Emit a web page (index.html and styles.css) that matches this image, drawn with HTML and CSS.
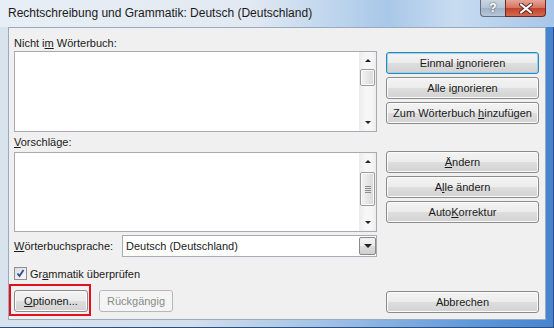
FILE: index.html
```html
<!DOCTYPE html>
<html lang="de">
<head>
    <meta charset="UTF-8">
    <title>Rechtschreibung und Grammatik</title>
    <link rel="stylesheet" href="styles.css">
</head>
<body>
    <div class="window">
        <div class="titlebar">
            <span class="title">Rechtschreibung und Grammatik: Deutsch (Deutschland)</span>
            <div class="caption">
                <span class="cap-help">?</span>
                <span class="cap-close">
                    <svg width="14" height="11" viewBox="0 0 14 11">
                        <path d="M2 1.5 L12 9.5 M12 1.5 L2 9.5" stroke="#5a2a22" stroke-width="4" stroke-linecap="round"/>
                        <path d="M2 1.5 L12 9.5 M12 1.5 L2 9.5" stroke="#fff" stroke-width="2.2" stroke-linecap="round"/>
                    </svg>
                </span>
            </div>
        </div>
        <div class="client">
            <div class="left">
                <div class="label first">Nicht i<u>m</u> Wörterbuch:</div>
                <div class="listbox top-box">
                    <div class="list-text"></div>
                    <div class="vscroll">
                        <div class="arrow"><span class="tri-up"></span></div>
                        <div class="thumb small"></div>
                        <div class="track"></div>
                        <div class="arrow"><span class="tri-down"></span></div>
                    </div>
                </div>
                <div class="label second"><u>V</u>orschläge:</div>
                <div class="listbox bottom-box">
                    <div class="list-text"></div>
                    <div class="vscroll">
                        <div class="arrow"><span class="tri-up"></span></div>
                        <div class="thumb big"><span class="grip"></span></div>
                        <div class="track"></div>
                        <div class="arrow"><span class="tri-down"></span></div>
                    </div>
                </div>
                <div class="langrow">
                    <span class="lang-label"><u>W</u>örterbuchsprache:</span>
                    <div class="combo">
                        <span class="combo-text">Deutsch (Deutschland)</span>
                        <span class="combo-btn"><span class="tri-down"></span></span>
                    </div>
                </div>
                <div class="checkrow">
                    <span class="checkbox">
                        <svg width="11" height="11" viewBox="0 0 11 11">
                            <path d="M2.5 5.5 L4.5 8 L8.5 2" fill="none" stroke="#2a4c9c" stroke-width="1.8"/>
                        </svg>
                    </span>
                    <span>Gr<u>a</u>mmatik überprüfen</span>
                </div>
                <div class="bottomrow">
                    <span class="highlight"><button class="btn small-btn"><u>O</u>ptionen...</button></span>
                    <button class="btn small-btn" disabled>Rückgängig</button>
                </div>
            </div>
            <div class="right">
                <div class="btngroup">
                    <button class="btn default">Einmal <u>i</u>gnorieren</button>
                    <button class="btn">Alle i<u>g</u>norieren</button>
                    <button class="btn">Zum Wörterbuch <u>h</u>inzufügen</button>
                </div>
                <div class="btngroup second-group">
                    <button class="btn"><u>Ä</u>ndern</button>
                    <button class="btn">A<u>l</u>le ändern</button>
                    <button class="btn">Auto<u>K</u>orrektur</button>
                </div>
                <button class="btn cancel">Abbrechen</button>
            </div>
        </div>
    </div>
</body>
</html>
```

FILE: styles.css
```css
body {
    margin: 0;
    font-family: "Liberation Sans", Arial, sans-serif;
    font-size: 11px;
    color: #1a1a1a;
}
.window {
    width: 554px;
    height: 328px;
    display: flex;
    flex-direction: column;
    background: linear-gradient(to right, #d9e3ee 0%, #d3dfec 35%, #9fc0e6 60%, #5f98da 85%, #4584d0 100%);
    box-shadow: inset 0 -1px 0 #2b4f7e, inset -1px 0 0 #2b4f7e;
}
.titlebar {
    height: 27px;
    display: flex;
    align-items: flex-start;
    padding: 0 8px;
    background: linear-gradient(to right, #e8eef5 0%, #e2e9f2 45%, #c3d8ee 58%, #a9c7e8 70%, #c8dcf0 82%, #a6c6ea 100%);
}
.title {
    font-size: 12px;
    line-height: 27px;
}
.caption {
    margin-left: auto;
    display: flex;
}
.cap-help {
    width: 25px;
    height: 17px;
    box-sizing: border-box;
    border: 1px solid #5f6f82;
    border-top: none;
    border-right: none;
    border-radius: 0 0 0 4px;
    background: linear-gradient(#c9d5e2 0%, #b5c4d4 50%, #9fb1c6 51%, #b7c7d8 100%);
    color: #fff;
    font-weight: bold;
    font-size: 12px;
    text-align: center;
    line-height: 16px;
    text-shadow: 0 0 2px #333;
}
.cap-close {
    width: 41px;
    height: 17px;
    box-sizing: border-box;
    border: 1px solid #6b2a22;
    border-top: none;
    border-radius: 0 0 4px 0;
    background: linear-gradient(#e6a498 0%, #d6725f 50%, #c4402b 51%, #d26a4f 100%);
    display: flex;
    align-items: center;
    justify-content: center;
}
.client {
    flex: 1;
    margin: 0 8px 8px 8px;
    border: 1px solid #9aaabd;
    background: #f0f0f0;
    display: flex;
    column-gap: 9px;
    padding: 0 6px 6px 5px;
}
.left {
    width: 363px;
    display: flex;
    flex-direction: column;
}
.right {
    width: 153px;
    display: flex;
    flex-direction: column;
}
.label {
    line-height: 16px;
}
.label.first {
    margin-top: 7px;
}
.label.second {
    line-height: 20px;
}
.listbox {
    display: flex;
    border: 1px solid #a7abb0;
    background: #fff;
    box-sizing: border-box;
}
.top-box {
    height: 81px;
}
.bottom-box {
    height: 80px;
}
.list-text {
    flex: 1;
}
.vscroll {
    width: 17px;
    display: flex;
    flex-direction: column;
    background: linear-gradient(to right, #ececec, #f7f7f7 40%, #f7f7f7 70%, #ededed);
}
.arrow {
    height: 17px;
    display: flex;
    align-items: center;
    justify-content: center;
}
.tri-up {
    border-left: 3px solid transparent;
    border-right: 3px solid transparent;
    border-bottom: 3px solid #222;
}
.tri-down {
    border-left: 3px solid transparent;
    border-right: 3px solid transparent;
    border-top: 3px solid #222;
}
.thumb {
    margin: 0 1px;
    border: 1px solid #9c9c9c;
    border-radius: 2px;
    background: linear-gradient(to right, #f4f4f4, #e6e6e6 50%, #d9d9d9);
    box-shadow: inset 0 0 0 1px #fbfbfb;
    display: flex;
    align-items: center;
    justify-content: center;
}
.thumb.small {
    height: 15px;
}
.thumb.big {
    height: 32px;
    margin-top: 2px;
}
.grip {
    width: 6px;
    height: 7px;
    background: repeating-linear-gradient(#8c8c8c 0, #8c8c8c 1px, transparent 1px, transparent 2px);
}
.track {
    flex: 1;
}
.langrow {
    margin-top: 3px;
    height: 22px;
    display: flex;
    align-items: center;
}
.lang-label {
    width: 108px;
}
.combo {
    flex: 1;
    height: 22px;
    box-sizing: border-box;
    border: 1px solid #a7abb0;
    background: #fff;
    display: flex;
    align-items: center;
}
.combo-text {
    flex: 1;
    padding-left: 3px;
}
.combo-btn {
    width: 17px;
    height: 18px;
    box-sizing: border-box;
    border: 1px solid #8a8a8a;
    border-radius: 2px;
    background: linear-gradient(#f2f2f2 0%, #ebebeb 50%, #dddddd 51%, #cfcfcf 100%);
    display: flex;
    align-items: center;
    justify-content: center;
}
.combo-btn .tri-down {
    border-left-width: 4px;
    border-right-width: 4px;
    border-top-width: 4px;
}
.checkrow {
    margin-top: 10px;
    height: 13px;
    display: flex;
    align-items: center;
    column-gap: 3px;
}
.checkbox {
    width: 13px;
    height: 13px;
    box-sizing: border-box;
    border: 1px solid #8e8f8f;
    background: linear-gradient(135deg, #dcdcdc, #fbfbfb);
    display: flex;
    align-items: center;
    justify-content: center;
}
.bottomrow {
    margin-top: 10px;
    display: flex;
    column-gap: 11px;
}
.btn {
    height: 22px;
    padding: 0;
    border: 1px solid #8b8b8b;
    border-radius: 3px;
    background: linear-gradient(#f3f3f3 0%, #ececec 50%, #dedede 51%, #d2d2d2 100%);
    box-shadow: inset 0 0 0 1px #fbfbfb;
    font-family: inherit;
    font-size: 11px;
    color: #1a1a1a;
    text-align: center;
}
.btn.default {
    border-color: #3c7fb1;
    box-shadow: inset 0 0 0 1px #8fd7f2;
}
.btn:disabled {
    border-color: #b5b8bb;
    background: #f4f4f4;
    box-shadow: none;
    color: #8a8a8a;
}
.small-btn {
    width: 74px;
}
.btngroup {
    display: flex;
    flex-direction: column;
    row-gap: 3px;
    margin-top: 24px;
}
.btngroup.second-group {
    margin-top: 27px;
}
.cancel {
    margin-top: auto;
}
.highlight {
    position: relative;
    display: flex;
}
.highlight::after {
    content: "";
    position: absolute;
    left: -5px;
    top: -6px;
    right: -3px;
    bottom: -4px;
    border: 2px solid #e2101c;
}
```
